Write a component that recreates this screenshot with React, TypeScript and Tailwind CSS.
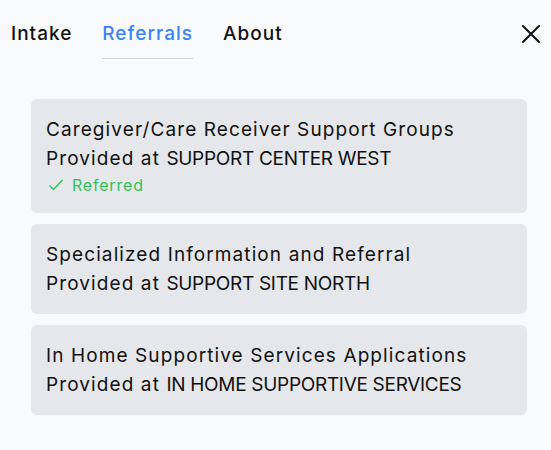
import React from "react";

const cards = [
  { title: "Caregiver/Care Receiver Support Groups", place: "SUPPORT CENTER WEST", referred: true },
  { title: "Specialized Information and Referral", place: "SUPPORT SITE NORTH", referred: false },
  { title: "In Home Supportive Services Applications", place: "IN HOME SUPPORTIVE SERVICES", referred: false },
];

export default function App() {
  return (
    <div
      className="w-[551px] h-[450px] bg-[#f9fafb] text-[#111] overflow-hidden"
      style={{ fontFamily: 'Inter, sans-serif' }}
    >
      <div className="flex items-start justify-between pl-[11px] pr-[10px] pt-[21px]">
        <div className="flex gap-[30px] text-[19px] font-medium leading-[26px] tracking-[1px]">
          <div className="pb-[11px]">Intake</div>
          <div className="pb-[11px] text-[#3b82f6] border-b border-[#d1d5db]">Referrals</div>
          <div className="pb-[11px]">About</div>
        </div>
        <svg width="20" height="20" viewBox="0 0 20 20" className="mt-[3px]" fill="none" stroke="#111" strokeWidth="2" strokeLinecap="round">
          <path d="M2 2L18 18M18 2L2 18" />
        </svg>
      </div>
      <div className="flex flex-col gap-[11px] pl-[31px] pr-[24px] pt-[40px]">
        {cards.map((c) => (
          <div key={c.title} className="bg-[#e5e7eb] rounded-md px-[15px] pt-[16px] pb-[16px] text-[19px] leading-[29px] tracking-[1.1px]">
            <div className="whitespace-nowrap">{c.title}</div>
            <div className="whitespace-nowrap">
              Provided at <span className="tracking-[-0.3px]">{c.place}</span>
            </div>
            {c.referred && (
              <div className="flex items-center gap-[8px] text-[16px] leading-[24px] tracking-[0.8px] text-[#2fc25b]">
                <svg width="16" height="12" viewBox="0 0 16 12" fill="none" stroke="currentColor" strokeWidth="1.4" className="ml-[2px]">
                  <path d="M1.5 6.5L5.5 10.5L14.5 1" />
                </svg>
                <span>Referred</span>
              </div>
            )}
          </div>
        ))}
      </div>
    </div>
  );
}
